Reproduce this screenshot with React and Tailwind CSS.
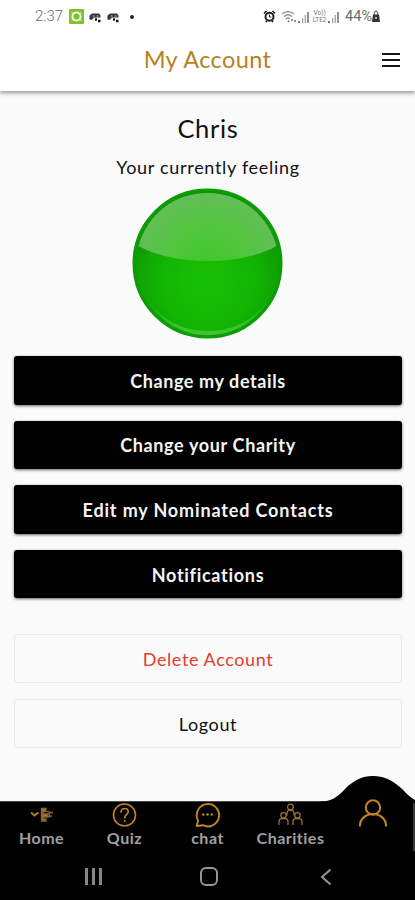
import React from 'react'

const primaryActions = [
  { label: 'Change my details', spacing: 'tracking-[0.6px]' },
  { label: 'Change your Charity', spacing: 'tracking-[0.65px]' },
  { label: 'Edit my Nominated Contacts', spacing: 'tracking-[0.85px]' },
  { label: 'Notifications', spacing: 'tracking-[0.7px]' },
]

const SignalIcon = () => (
  <svg width="12" height="14" viewBox="0 0 12 14" fill="#777">
    <rect x="0" y="11" width="2" height="2" />
    <rect x="4" y="8" width="1.4" height="5" fill="#aaa" />
    <rect x="6.6" y="5" width="1.4" height="8" fill="#aaa" />
    <rect x="9.2" y="2" width="1.6" height="11" />
  </svg>
)

const PadIcon = () => (
  <svg width="13" height="12" viewBox="0 0 13 12">
    <path d="M.5 8.5V4.5L3 2.5H10L11.5 4.5V6.5H5L2.5 9Z" fill="#333" />
    <path d="M3.5 5h2M7.5 5h2" stroke="#ccc" />
    <path d="M6 8.5h2M9 10h2.5" stroke="#111" strokeWidth="2.4" />
  </svg>
)

function StatusBar() {
  return (
    <div className="flex h-[33px] items-center justify-between pl-[35px] pr-[35px] font-[Roboto,sans-serif] text-[#6b6b6b]">
      <div className="flex items-center">
        <span className="w-[34px] text-[15px] font-light">2:37</span>
        <svg width="15" height="15" viewBox="0 0 15 15">
          <rect width="15" height="15" rx="1" fill="#7ec12c" />
          <circle cx="7.5" cy="7.5" r="4.1" fill="none" stroke="#f4faeb" strokeWidth="2" />
          <path d="M2.5 3.5l2 1M12.5 11.5l-2-1M2.8 11.8l1.5-1.5M12.2 3.2l-1.5 1.5" stroke="#f4faeb" />
        </svg>
        <span className="ml-[5px] flex gap-[5px]"><PadIcon /><PadIcon /></span>
        <span className="ml-[10px] size-1 rounded-full bg-[#222]" />
      </div>
      <div className="flex items-center">
        <svg width="13" height="13" viewBox="0 0 13 13">
          <path d="M1 3.5L3.5 1M12 3.5L9.5 1M3 12l1-1.5M10 12l-1-1.5" stroke="#222" strokeWidth="1.6" />
          <circle cx="6.5" cy="6.8" r="4" fill="none" stroke="#222" strokeWidth="2" />
          <path d="M6.5 4.5V7H8.3" fill="none" stroke="#222" />
        </svg>
        <svg className="ml-[5px]" width="17" height="14" viewBox="0 0 17 14" fill="none" stroke="#999" strokeWidth="1.4">
          <path d="M1 4Q7 -1 13 4M3 6.5Q7 3 11 6.5M5 9Q7 7 9 9" />
          <path d="M7 10.8l1.3 1.2M11 9v2M14 10v2" stroke="#666" />
        </svg>
        <SignalIcon />
        <span className="ml-[1px] flex w-[17px] flex-col items-center text-[6.5px] leading-[7px] text-[#777]">
          <span>Vo))</span>
          <span>LTE2</span>
        </span>
        <SignalIcon />
        <span className="ml-[5px] text-[14.5px]">44%</span>
        <svg className="-ml-px -mr-px" width="10" height="13" viewBox="0 0 10 13">
          <path d="M3.3 5V2.5Q5 0 6.7 2.5V5" fill="none" stroke="#777" strokeWidth="1.3" />
          <path d="M2 4.5H8L9 12H1Z" fill="#333" />
          <circle cx="5" cy="8" r="1" fill="#ddd" />
        </svg>
      </div>
    </div>
  )
}

// Glossy status orb
function FeelingOrb() {
  return (
    <svg className="mt-[7px]" width="152" height="152" viewBox="0 0 152 152">
      <defs>
        <radialGradient id="orb" cx="0.5" cy="0.62" r="0.58">
          <stop offset="0" stopColor="#17c003" />
          <stop offset="0.55" stopColor="#13b503" />
          <stop offset="1" stopColor="#0c9604" />
        </radialGradient>
        <radialGradient id="gloss" gradientUnits="userSpaceOnUse" cx="76" cy="76" r="78">
          <stop offset="0" stopColor="#41c829" />
          <stop offset="0.5" stopColor="#51c53e" />
          <stop offset="1" stopColor="#66bd5d" />
        </radialGradient>
        <linearGradient id="rim" x1="0" y1="0" x2="0" y2="1">
          <stop offset="0" stopColor="#50c944" stopOpacity="0.15" />
          <stop offset="1" stopColor="#50c944" stopOpacity="0.8" />
        </linearGradient>
      </defs>
      <circle cx="75.5" cy="75.5" r="73.5" fill="url(#orb)" stroke="#0c9c08" strokeWidth="3" />
      <path d="M6.5 58C15.5 26 42.5 5 75.5 5s60 21 69 53C126.5 68 101.5 73 75.5 73S24.5 68 6.5 58Z" fill="url(#gloss)" />
      <path d="M14 109C28 134 50 147 76 147s48-13 62-38c-14 23-37 34-62 34s-48-11-62-34Z" fill="url(#rim)" />
    </svg>
  )
}

const HomeIcon = () => (
  <svg width="26" height="24" viewBox="0 0 26 24" fill="none">
    <path d="M2 9.5L5.5 12.5L9.5 9.5" stroke="#b07d35" strokeWidth="2" />
    <path d="M12.5 5.5h4.5v3h-3v2.5h5v3h-5v2h3v2h-4.5Z" fill="#b5742c" stroke="#86623c" strokeWidth="1.4" />
    <path d="M18 8.5l6 1.5M18 14l5-1M20.5 10v3" stroke="#7d6039" strokeWidth="1.3" />
  </svg>
)

const QuizIcon = () => (
  <svg width="26" height="26" viewBox="0 0 26 26" fill="none" stroke="#c18429" strokeWidth="1.6">
    <circle cx="12.5" cy="13" r="11" />
    <path d="M9 10.3C9 5.2 16.2 5.3 16.2 9.7C16.2 12.6 12.7 12.3 12.7 16" strokeLinecap="round" />
    <circle cx="12.7" cy="19" r="1" fill="#c18429" stroke="none" />
  </svg>
)

const ChatIcon = () => (
  <svg width="26" height="26" viewBox="0 0 26 26" fill="none" stroke="#c38322" strokeWidth="1.9">
    <path d="M1.7 24L3.1 18.5A11.2 11.2 0 1 1 8 23.2Z" strokeLinejoin="round" />
    <g fill="#c38322" stroke="none">
      <circle cx="8.3" cy="12.5" r="1.2" />
      <circle cx="12.5" cy="12.5" r="1.2" />
      <circle cx="16.7" cy="12.5" r="1.2" />
    </g>
  </svg>
)

const CharitiesIcon = () => (
  <svg width="26" height="24" viewBox="0 0 26 24" fill="none" stroke="#a37635" strokeWidth="1.2">
    <circle cx="12.5" cy="4" r="2.9" />
    <path d="M9 12.5V10Q9 7.5 11.500 7.5h2q2.5 0 2.5 2.5V12.5" />
    <circle cx="5.5" cy="12.3" r="2.7" />
    <path d="M1 22v-3.5Q1 15.6 3.8 15.6h3.4q2.800 0 2.800 2.900V22" />
    <circle cx="19.5" cy="12.3" r="2.7" />
    <path d="M15 22v-3.5q0-2.9 2.8-2.9h3.4q2.8 0 2.8 2.9V22" />
  </svg>
)

const tabs = [
  { label: 'Home', icon: HomeIcon },
  { label: 'Quiz', icon: QuizIcon },
  { label: 'chat', icon: ChatIcon },
  { label: 'Charities', icon: CharitiesIcon },
]

function BottomBar() {
  return (
    <nav className="relative mt-auto bg-black">
      {/* Raised hump behind the active tab */}
      <svg className="absolute -top-[25px] right-0" width="100" height="27" viewBox="0 0 100 27">
        <path d="M0 27V26C17 26 21 22 30 13C39 4 47 0 58 0C69 0 77 4 86 12C92 18 95 21 100 24V27Z" fill="#000" />
      </svg>
      <div className="flex h-[50px] border-t border-[#444]">
        {tabs.map(({ label, icon: Icon }) => (
          <button key={label} className="flex w-[83px] flex-col items-center">
            <span className="flex h-[26px] items-center"><Icon /></span>
            <span className="-mt-px text-[16px] font-bold leading-[21px] tracking-[0.5px] text-[#a0a0a0]">{label}</span>
          </button>
        ))}
        <button className="relative -mt-[4px] flex w-[81px] justify-center">
          <svg width="32" height="32" viewBox="0 0 32 32" fill="none" stroke="#c18229" strokeWidth="2.1">
            <circle cx="16" cy="9.5" r="7.2" />
            <path d="M3 28.5V27.5A13 11.5 0 0 1 29 27.5V28.5" />
          </svg>
        </button>
        <span className="w-[2px] bg-[#3a3a3a]" />
      </div>
      <div className="flex h-[49px] items-center pt-[2px] text-[#969696]">
        <div className="flex w-[187px] justify-center gap-[4px]">
          <span className="h-[17px] w-[3px] bg-[#858585]" />
          <span className="h-[17px] w-[3px] bg-[#858585]" />
          <span className="h-[17px] w-[3px] bg-[#858585]" />
        </div>
        <span className="ml-[13px] h-[19px] w-[18px] rounded-[6px] border-[2.5px] border-[#969696]" />
        <svg className="ml-[102px]" width="12" height="18" viewBox="0 0 12 18" fill="none" stroke="currentColor" strokeWidth="2">
          <path d="M10.5 1.5L2 9l8.5 7.5" />
        </svg>
      </div>
    </nav>
  )
}

export default function App() {
  return (
    <div className="flex h-[900px] w-full flex-col overflow-hidden bg-[#fafafa] font-[Lato,sans-serif] text-[#111]">
      <header className="h-[91px] shrink-0 bg-white shadow-[0_2px_4px_rgba(0,0,0,0.4)]">
        <StatusBar />
        <div className="flex h-[53px] items-center">
          <span className="w-[46px]" />
          <h1 className="flex-1 text-center text-[23.5px] tracking-[0.4px] text-[#b7811f]">My Account</h1>
          <button className="flex w-[46px] flex-col items-center gap-[4px] pr-[2px]">
            <span className="h-[2px] w-[18px] bg-[#151515]" />
            <span className="h-[2px] w-[18px] bg-[#151515]" />
            <span className="h-[2px] w-[18px] bg-[#151515]" />
          </button>
        </div>
      </header>

      <main className="flex flex-col items-center pl-[14px] pr-[13px] pt-[19px]">
        <h2 className="text-[25.5px] leading-9 tracking-[0.7px]">Chris</h2>
        <p className="mt-2 text-[18px] leading-[27px] tracking-[0.7px]">Your currently feeling</p>
        <FeelingOrb />
        <div className="mt-4 flex w-full flex-col gap-4">
          {primaryActions.map((action) => (
            <button key={action.label} className={`h-[48.6px] rounded-[3px] bg-black pt-[2px] text-[18px] font-bold text-[#f4f4f4] shadow-[0_1px_3px_rgba(0,0,0,0.6)] ${action.spacing}`}>
              {action.label}
            </button>
          ))}
        </div>
        <div className="mt-9 flex w-full flex-col gap-4 text-[18px] tracking-[0.6px]">
          <button className="h-[48.6px] rounded-[3px] border border-[#e9e9e9] pt-[2px] text-[#e53a2e]">Delete Account</button>
          <button className="h-[48.6px] rounded-[3px] border border-[#e9e9e9] pt-[2px]">Logout</button>
        </div>
      </main>

      <BottomBar />
    </div>
  )
}
